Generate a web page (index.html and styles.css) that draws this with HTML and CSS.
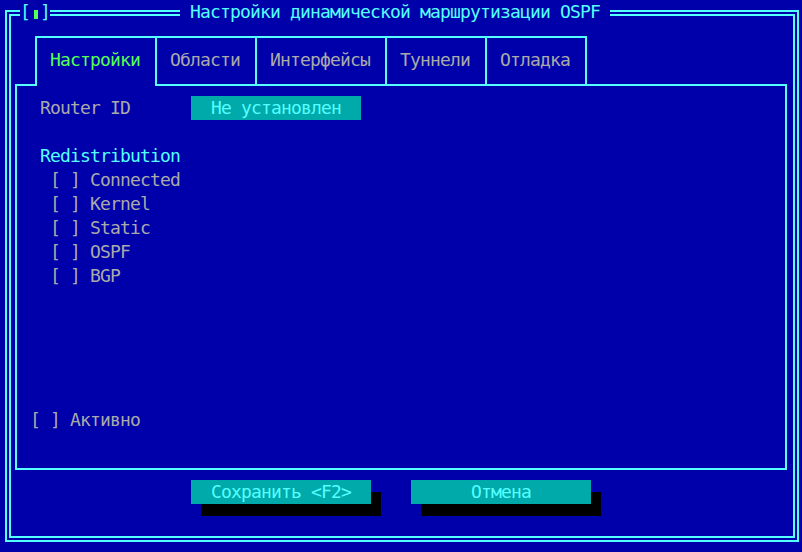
FILE: index.html
```html
<!DOCTYPE html>
<html lang="ru">
<head>
<meta charset="utf-8">
<title>OSPF</title>
<link rel="stylesheet" href="styles.css">
</head>
<body>
<div class="screen">
  <div class="window">
    <div class="close"><span class="br">[</span><span class="cell"><span class="dot"></span></span><span class="br">]</span></div>
    <div class="title">Настройки динамической маршрутизации OSPF</div>

    <div class="tabs">
      <div class="tab active">Настройки</div>
      <div class="tab">Области</div>
      <div class="tab">Интерфейсы</div>
      <div class="tab">Туннели</div>
      <div class="tab last">Отладка</div>
    </div>

    <div class="panel">
      <div class="row field-row">
        <span class="label">Router ID</span>
        <span class="field">Не установлен</span>
      </div>
      <div class="row heading">Redistribution</div>
      <div class="checks">
        <div class="row check">[ ] Connected</div>
        <div class="row check">[ ] Kernel</div>
        <div class="row check">[ ] Static</div>
        <div class="row check">[ ] OSPF</div>
        <div class="row check">[ ] BGP</div>
      </div>
      <div class="row active-check">[ ] Активно</div>
    </div>

    <div class="buttons">
      <div class="btn">Сохранить &lt;F2&gt;</div>
      <div class="btn">Отмена</div>
    </div>
  </div>
</div>
</body>
</html>
```
FILE: styles.css
```css
html, body {
  margin: 0;
  padding: 0;
  background: #0000aa;
}

body {
  font-family: "DejaVu Sans Mono", "Liberation Mono", monospace;
  font-size: 18px;
  letter-spacing: -0.84px;
  line-height: 24px;
  color: #aaaaaa;
}

.screen {
  width: 802px;
  height: 552px;
  overflow: hidden;
  padding-top: 10px;
  box-sizing: border-box;
}

.window {
  position: relative;
  margin-left: 5px;
  width: 794px;
  height: 532px;
  border: 6px double #55ffff;
  box-sizing: border-box;
}

.close {
  position: absolute;
  top: -16px;
  left: 9px;
  height: 24px;
  background: #0000aa;
  color: #55ffff;
  display: flex;
  white-space: pre;
}

.close .br {
  width: 10px;
  display: inline-block;
}

.close .cell {
  width: 10px;
  position: relative;
  display: inline-block;
}

.close .dot {
  position: absolute;
  left: 4px;
  top: 10px;
  width: 4px;
  height: 9px;
  background: #55ff55;
}

.title {
  position: absolute;
  top: -16px;
  left: 169px;
  height: 24px;
  padding: 0 10px;
  background: #0000aa;
  color: #55ffff;
  white-space: pre;
}

.tabs {
  display: flex;
  margin: 20px 0 0 24px;
  position: relative;
  z-index: 1;
}

.tab {
  border-top: 2px solid #55ffff;
  border-left: 2px solid #55ffff;
  padding: 10px 15px 12px 13px;
  white-space: pre;
}

.tab.last {
  border-right: 2px solid #55ffff;
}

.tab.active {
  color: #55ff55;
  background: #0000aa;
  padding-bottom: 14px;
  margin-bottom: -2px;
}

.panel {
  margin-left: 4px;
  width: 772px;
  height: 386px;
  border: 2px solid #55ffff;
  box-sizing: border-box;
  padding-top: 10px;
}

.row {
  height: 24px;
  white-space: pre;
}

.field-row {
  display: flex;
  padding-left: 23px;
}

.label {
  width: 151px;
}

.field {
  width: 170px;
  box-sizing: border-box;
  padding-left: 20px;
  background: #00aaaa;
  color: #55ffff;
}

.heading {
  margin-top: 24px;
  padding-left: 23px;
  color: #55ffff;
}

.check {
  padding-left: 33px;
}

.active-check {
  margin-top: 120px;
  padding-left: 13px;
}

.buttons {
  display: flex;
  gap: 40px;
  margin: 10px 0 0 180px;
}

.btn {
  width: 180px;
  height: 24px;
  background: #00aaaa;
  color: #55ffff;
  text-align: center;
  white-space: pre;
  box-shadow: 10px 12px 0 #000000;
}
```
